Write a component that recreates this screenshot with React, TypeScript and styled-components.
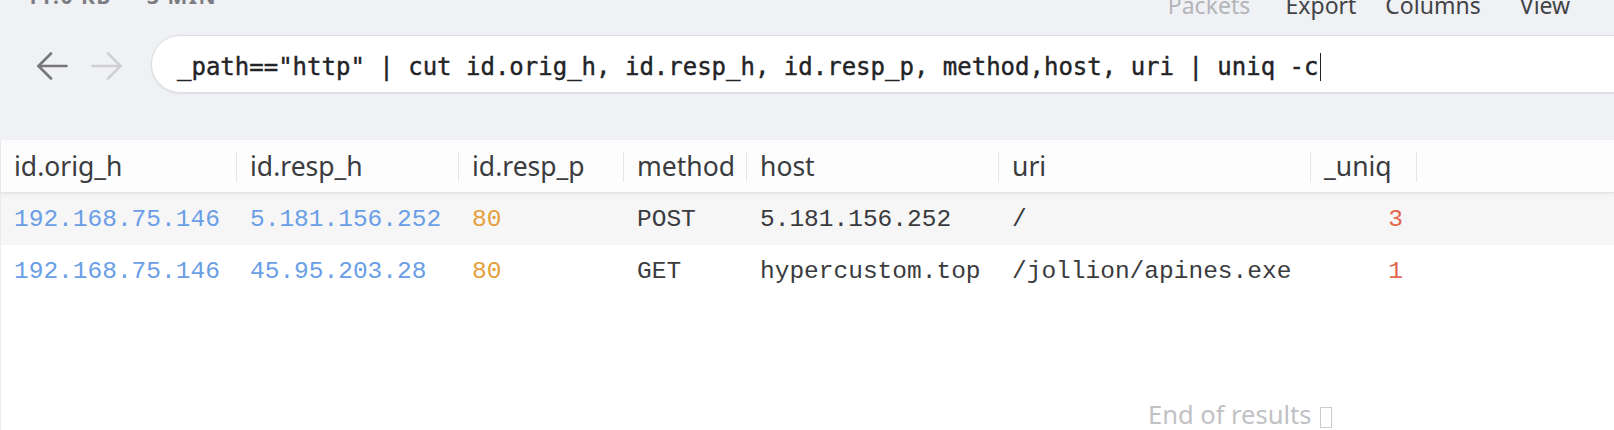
import React from "react";
import styled, { createGlobalStyle } from "styled-components";

const GlobalStyle = createGlobalStyle`
  html, body {
    margin: 0;
    padding: 0;
    background: #ffffff;
  }
  * { box-sizing: border-box; }
`;

const Page = styled.div`
  width: 1614px;
  height: 430px;
  overflow: hidden;
  display: flex;
  flex-direction: column;
  background: #ffffff;
  font-family: "Noto Sans", "DejaVu Sans", sans-serif;
`;

const TopBar = styled.header`
  flex: 0 0 140px;
  height: 140px;
  background: #f0f1f5;
  display: flex;
  flex-direction: column;
`;

const HeaderRow = styled.div`
  display: flex;
  justify-content: space-between;
  align-items: flex-start;
  height: 32px;
  margin-top: -16px;
  padding: 0 13px 0 26px;
`;

const Meta = styled.div`
  margin-top: 1px;
  font-size: 21px;
  line-height: 22px;
  font-weight: 700;
  letter-spacing: 1.5px;
  color: #7c7d82;
  white-space: pre;
`;

const Menu = styled.nav`
  display: flex;
  margin-top: 10px;
`;

const MenuItem = styled.div<{ $dim?: boolean }>`
  width: 112px;
  text-align: center;
  font-size: 23px;
  line-height: 22px;
  color: ${(p) => (p.$dim ? "#b4b5b9" : "#424347")};
`;

const SearchRow = styled.div`
  display: flex;
  align-items: center;
  height: 58px;
  margin-top: 19px;
  padding-left: 36px;
`;

const NavButton = styled.button<{ $disabled?: boolean }>`
  display: flex;
  align-items: center;
  justify-content: center;
  padding: 0;
  border: none;
  background: transparent;
  width: 32px;
  height: 28px;
  margin-top: 4px;
  color: ${(p) => (p.$disabled ? "#cfd0d4" : "#77787c")};
  & + & {
    margin-left: 23px;
  }
`;

const QueryBox = styled.div`
  flex: 1;
  height: 58px;
  margin-left: 28px;
  margin-right: -40px;
  border-radius: 29px;
  background: #ffffff;
  border: 1px solid #dcdde2;
  box-shadow: 0 1px 2px rgba(0, 0, 0, 0.08);
  display: flex;
  align-items: center;
  padding-left: 25px;
  padding-top: 6px;
`;

const QueryText = styled.span`
  font-family: "DejaVu Sans Mono", "Liberation Mono", monospace;
  font-size: 24px;
  color: #232427;
  -webkit-text-stroke: 0.4px #232427;
  white-space: pre;
`;

const Caret = styled.span`
  display: inline-block;
  width: 1.5px;
  height: 28px;
  background: #222;
  margin-left: 1px;
  vertical-align: middle;
`;

const TablePanel = styled.section`
  flex: 1;
  background: #ffffff;
  border-left: 1px solid #ececec;
  display: flex;
  flex-direction: column;
`;

const columns = "236px 222px 165px 123px 252px 312px 106px";

const HeadRow = styled.div`
  display: grid;
  grid-template-columns: ${columns};
  height: 53px;
  background: #fdfdfd;
  border-bottom: 1px solid #e4e4e6;
  box-shadow: 0 2px 3px rgba(0, 0, 0, 0.05);
  position: relative;
  z-index: 1;
`;

const HeadCell = styled.div`
  position: relative;
  padding: 0 13px;
  font-size: 26.5px;
  line-height: 52px;
  color: #3b3c40;
  white-space: nowrap;
  &::after {
    content: "";
    position: absolute;
    right: 0;
    top: 12px;
    bottom: 10px;
    width: 1px;
    background: #e6e7ea;
  }
`;

const DataRow = styled.div<{ $shade?: boolean }>`
  display: grid;
  grid-template-columns: ${columns};
  height: 52px;
  background: ${(p) => (p.$shade ? "#f6f6f7" : "#ffffff")};
`;

type Tone = "addr" | "port" | "count" | "plain";

const toneColor: Record<Tone, string> = {
  addr: "#6a9ee6",
  port: "#e2a13b",
  count: "#e2674d",
  plain: "#3a3b3e",
};

const Cell = styled.div<{ $tone: Tone; $right?: boolean }>`
  padding: 0 13px;
  font-family: "Liberation Mono", "DejaVu Sans Mono", monospace;
  font-size: 24.5px;
  line-height: 54px;
  white-space: nowrap;
  color: ${(p) => toneColor[p.$tone]};
  text-align: ${(p) => (p.$right ? "right" : "left")};
  padding-right: ${(p) => (p.$right ? "14px" : "13px")};
`;

const Footer = styled.div`
  padding-top: 102px;
  padding-left: 1147px;
  font-size: 25.5px;
  line-height: 30px;
  color: #c0c1c4;
  white-space: nowrap;
`;

const Tofu = styled.span`
  display: inline-block;
  width: 12px;
  height: 21px;
  margin-left: 9px;
  border: 1.5px solid #cbcccf;
  vertical-align: -4px;
`;

const Arrow = ({ dir }: { dir: "left" | "right" }) => (
  <svg width="32" height="28" viewBox="0 0 32 28" fill="none">
    <g
      stroke="currentColor"
      strokeWidth="2.6"
      strokeLinecap="round"
      strokeLinejoin="round"
      transform={dir === "right" ? "translate(32 0) scale(-1 1)" : undefined}
    >
      <path d="M30.5 14H2.5" />
      <path d="M15 1.5L2.5 14L15 26.5" />
    </g>
  </svg>
);

const headers = ["id.orig_h", "id.resp_h", "id.resp_p", "method", "host", "uri", "_uniq"];

const rows = [
  ["192.168.75.146", "5.181.156.252", "80", "POST", "5.181.156.252", "/", "3"],
  ["192.168.75.146", "45.95.203.28", "80", "GET", "hypercustom.top", "/jollion/apines.exe", "1"],
];

const tones: Tone[] = ["addr", "addr", "port", "plain", "plain", "plain", "count"];

export default function App() {
  return (
    <>
      <GlobalStyle />
      <Page>
        <TopBar>
          <HeaderRow>
            <Meta>{"11.0 KB  ·  3 MIN"}</Meta>
            <Menu>
              <MenuItem $dim>Packets</MenuItem>
              <MenuItem>Export</MenuItem>
              <MenuItem>Columns</MenuItem>
              <MenuItem>View</MenuItem>
            </Menu>
          </HeaderRow>
          <SearchRow>
            <NavButton aria-label="Back">
              <Arrow dir="left" />
            </NavButton>
            <NavButton $disabled aria-label="Forward">
              <Arrow dir="right" />
            </NavButton>
            <QueryBox>
              <QueryText>
                {'_path=="http" | cut id.orig_h, id.resp_h, id.resp_p, method,host, uri | uniq -c'}
              </QueryText>
              <Caret />
            </QueryBox>
          </SearchRow>
        </TopBar>
        <TablePanel>
          <HeadRow>
            {headers.map((h) => (
              <HeadCell key={h}>{h}</HeadCell>
            ))}
          </HeadRow>
          {rows.map((r, i) => (
            <DataRow key={i} $shade={i % 2 === 0}>
              {r.map((v, j) => (
                <Cell key={j} $tone={tones[j]} $right={j === 6}>
                  {v}
                </Cell>
              ))}
            </DataRow>
          ))}
          <Footer>
            End of results
            <Tofu />
          </Footer>
        </TablePanel>
      </Page>
    </>
  );
}
